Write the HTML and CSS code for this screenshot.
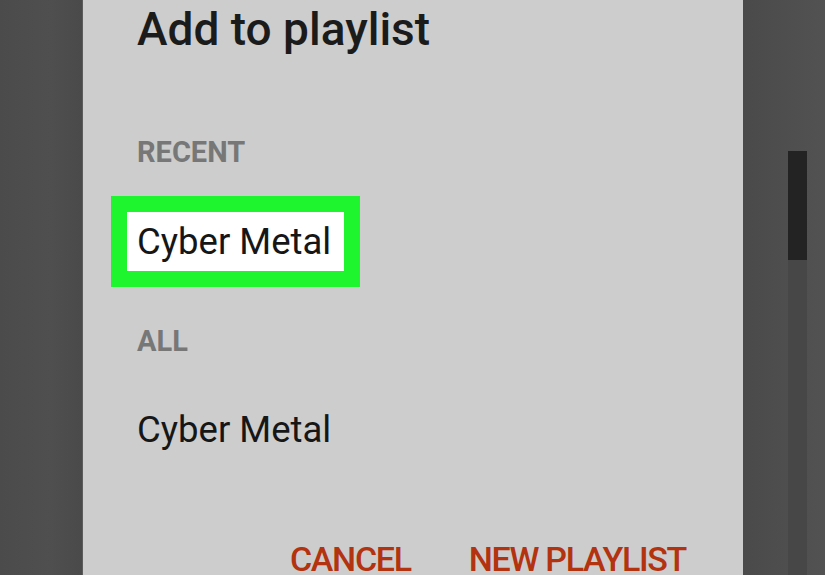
FILE: index.html
```html
<!DOCTYPE html>
<html lang="en">
  <head>
    <meta charset="UTF-8" />
    <meta name="viewport" content="width=device-width, initial-scale=1.0" />
    <title>Add to playlist</title>
    <link rel="stylesheet" href="styles.css">
  </head>
  <body>
    <div class="screen">
      <div class="gutter"></div>

      <!-- Dialog -->
      <div class="dialog">
        <h1 class="dialog-title">Add to playlist</h1>

        <div class="section-label recent-label">RECENT</div>
        <div class="highlight">
          <div class="item item-selected">Cyber Metal</div>
        </div>

        <div class="section-label all-label">ALL</div>
        <div class="item item-plain">Cyber Metal</div>

        <div class="actions">
          <button class="action-btn" type="button">CANCEL</button>
          <button class="action-btn" type="button">NEW PLAYLIST</button>
        </div>
      </div>

      <!-- Scrollbar behind the dialog -->
      <div class="side">
        <div class="track">
          <div class="thumb"></div>
        </div>
      </div>
    </div>
  </body>
</html>
```

FILE: styles.css
```css
html, body {
  margin: 0;
  height: 100%;
}

body {
  background-color: #4c4c4c;
  font-family: Roboto, "Liberation Sans", sans-serif;
  overflow: hidden;
}

.screen {
  display: flex;
  height: 575px;
  overflow: hidden;
}

.gutter {
  width: 82px;
  flex-shrink: 0;
  background: linear-gradient(to right, #4b4b4b, #4f4f4f 60%, #4a4a4a);
}

.dialog {
  width: 661px;
  flex-shrink: 0;
  box-sizing: border-box;
  background-color: #cdcdcd;
  border-left: 1px solid #5c5c5c;
  padding-left: 54px;
  display: flex;
  flex-direction: column;
  align-items: flex-start;
}

.dialog-title {
  margin: 7px 0 0 0;
  font-size: 46px;
  line-height: 45px;
  font-weight: 500;
  color: #1b1b1b;
}

.section-label {
  font-size: 29px;
  line-height: 29px;
  font-weight: 700;
  color: #777777;
}

.recent-label {
  margin-top: 86px;
}

.all-label {
  margin-top: 40px;
}

.highlight {
  margin: 29px 0 0 -26px;
  border: 16px solid #1ff52e;
  background-color: #ffffff;
}

.item {
  font-size: 36.5px;
  color: #161616;
}

.item-selected {
  line-height: 59px;
  padding: 0 13px 0 10px;
}

.item-plain {
  margin-top: 56px;
  line-height: 36px;
}

.actions {
  align-self: stretch;
  display: flex;
  justify-content: flex-end;
  gap: 58px;
  margin-top: 96px;
  padding-right: 57px;
}

.action-btn {
  border: none;
  background: none;
  padding: 0;
  font-family: inherit;
  font-size: 34px;
  line-height: 30px;
  font-weight: 500;
  letter-spacing: -1.3px;
  color: #b3320f;
  cursor: pointer;
}

.side {
  flex: 1;
  padding-left: 45px;
  background: linear-gradient(to right, #4a4a4a, #525252);
}

.track {
  width: 19px;
  height: 100%;
  background-color: #474747;
}

.thumb {
  margin-top: 151px;
  height: 109px;
  background-color: #232323;
}
```
